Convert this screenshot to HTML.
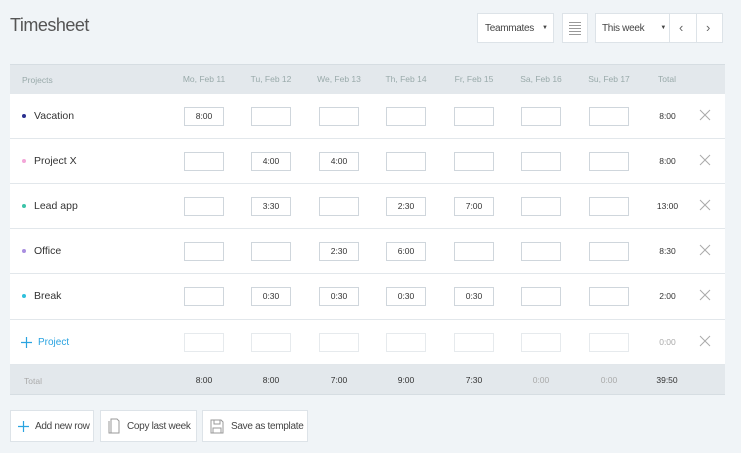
<html><head><style>
body{margin:0;width:741px;height:453px;background:#f0f4f7;font-family:"Liberation Sans",sans-serif;position:relative;overflow:hidden;color:#333}
.a{position:absolute}
.btn{position:absolute;background:#fff;border:1px solid #dde3e8;box-sizing:border-box;font-size:10px;letter-spacing:-0.3px;color:#444;display:flex;align-items:center;white-space:nowrap}
.row{position:absolute;left:10px;width:715px;height:45px;background:#fff;border-bottom:1px solid #e2e7eb;box-sizing:border-box}
.in{position:absolute;width:40px;height:19px;border:1px solid #cfd6dc;box-sizing:border-box;background:#fff;font-size:8.5px;text-align:center;line-height:17px;color:#333}
.hd{position:absolute;font-size:8.5px;color:#9aa;text-align:center;width:70px}
.lbl{position:absolute;left:24px;font-size:10.5px;top:16px}
.dot{position:absolute;left:12px;top:20px;width:4px;height:4px;border-radius:50%}
.tot{position:absolute;left:630px;width:55px;text-align:center;font-size:8.5px;top:17px}
.x{position:absolute;left:689px;top:15px}
</style></head><body>
<div class="a" style="left:10px;top:15px;font-size:18px;letter-spacing:-0.5px;color:#555">Timesheet</div>
<div class="btn" style="left:477px;top:13px;width:77px;height:30px;padding-left:7px">Teammates <span style="font-size:6px;margin-left:8px">▼</span></div>
<div class="btn" style="left:562px;top:13px;width:26px;height:30px;justify-content:center"><svg width="12" height="14"><g stroke="#999" stroke-width="1"><path d="M0 1.5h12M0 4.5h12M0 7.5h12M0 10.5h12M0 13.5h12"/></g></svg></div>
<div class="btn" style="left:595px;top:13px;width:128px;height:30px;padding-left:6px">This week <span style="font-size:6px;margin-left:16px">▼</span>
<div class="a" style="left:73px;top:0;width:1px;height:28px;background:#dde3e8"></div>
<div class="a" style="left:100px;top:0;width:1px;height:28px;background:#dde3e8"></div>
<div class="a" style="left:83px;top:6px;font-size:13px;color:#666">‹</div>
<div class="a" style="left:110px;top:6px;font-size:13px;color:#666">›</div></div>
<div class="a" style="left:10px;top:64px;width:715px;height:30px;background:#e3e8ec;border-top:1px solid #d6dde2;box-sizing:border-box"></div>
<div class="a" style="left:22px;top:75px;font-size:8.5px;color:#9aa">Projects</div>
<div class="hd" style="left:169px;top:74px">Mo, Feb 11</div><div class="hd" style="left:236px;top:74px">Tu, Feb 12</div><div class="hd" style="left:304px;top:74px">We, Feb 13</div><div class="hd" style="left:371px;top:74px">Th, Feb 14</div><div class="hd" style="left:439px;top:74px">Fr, Feb 15</div><div class="hd" style="left:506px;top:74px">Sa, Feb 16</div><div class="hd" style="left:574px;top:74px">Su, Feb 17</div><div class="hd" style="left:632px;top:74px">Total</div>

<div class="row" style="top:94px"><div class="dot" style="background:#2a2f8f"></div><div class="lbl">Vacation</div>
<div class="in" style="left:174px;top:13px">8:00</div><div class="in" style="left:241px;top:13px"></div><div class="in" style="left:309px;top:13px"></div><div class="in" style="left:376px;top:13px"></div><div class="in" style="left:444px;top:13px"></div><div class="in" style="left:511px;top:13px"></div><div class="in" style="left:579px;top:13px"></div><div class="tot">8:00</div><svg class="x" width="12" height="12"><path d="M1 1l10 10M11 1L1 11" stroke="#aaa" stroke-width="1"/></svg></div>

<div class="row" style="top:139px"><div class="dot" style="background:#f3a6d8"></div><div class="lbl">Project X</div>
<div class="in" style="left:174px;top:13px"></div><div class="in" style="left:241px;top:13px">4:00</div><div class="in" style="left:309px;top:13px">4:00</div><div class="in" style="left:376px;top:13px"></div><div class="in" style="left:444px;top:13px"></div><div class="in" style="left:511px;top:13px"></div><div class="in" style="left:579px;top:13px"></div><div class="tot">8:00</div><svg class="x" width="12" height="12"><path d="M1 1l10 10M11 1L1 11" stroke="#aaa" stroke-width="1"/></svg></div>

<div class="row" style="top:184px"><div class="dot" style="background:#3cc3a8"></div><div class="lbl">Lead app</div>
<div class="in" style="left:174px;top:13px"></div><div class="in" style="left:241px;top:13px">3:30</div><div class="in" style="left:309px;top:13px"></div><div class="in" style="left:376px;top:13px">2:30</div><div class="in" style="left:444px;top:13px">7:00</div><div class="in" style="left:511px;top:13px"></div><div class="in" style="left:579px;top:13px"></div><div class="tot">13:00</div><svg class="x" width="12" height="12"><path d="M1 1l10 10M11 1L1 11" stroke="#aaa" stroke-width="1"/></svg></div>

<div class="row" style="top:229px"><div class="dot" style="background:#a98ee0"></div><div class="lbl">Office</div>
<div class="in" style="left:174px;top:13px"></div><div class="in" style="left:241px;top:13px"></div><div class="in" style="left:309px;top:13px">2:30</div><div class="in" style="left:376px;top:13px">6:00</div><div class="in" style="left:444px;top:13px"></div><div class="in" style="left:511px;top:13px"></div><div class="in" style="left:579px;top:13px"></div><div class="tot">8:30</div><svg class="x" width="12" height="12"><path d="M1 1l10 10M11 1L1 11" stroke="#aaa" stroke-width="1"/></svg></div>

<div class="row" style="top:274px;height:46px"><div class="dot" style="background:#2fc0dc"></div><div class="lbl">Break</div>
<div class="in" style="left:174px;top:13px"></div><div class="in" style="left:241px;top:13px">0:30</div><div class="in" style="left:309px;top:13px">0:30</div><div class="in" style="left:376px;top:13px">0:30</div><div class="in" style="left:444px;top:13px">0:30</div><div class="in" style="left:511px;top:13px"></div><div class="in" style="left:579px;top:13px"></div><div class="tot">2:00</div><svg class="x" width="12" height="12"><path d="M1 1l10 10M11 1L1 11" stroke="#aaa" stroke-width="1"/></svg></div>

<div class="row" style="top:320px"><svg class="a" style="left:11px;top:17px" width="11" height="11"><path d="M5.5 0v11M0 5.5h11" stroke="#2aa3e0" stroke-width="1.2"/></svg><div class="lbl" style="left:28px;color:#2aa3e0;font-size:10px;top:17px">Project</div>
<div class="in" style="left:174px;top:13px;border-color:#e6eaed"></div><div class="in" style="left:241px;top:13px;border-color:#e6eaed"></div><div class="in" style="left:309px;top:13px;border-color:#e6eaed"></div><div class="in" style="left:376px;top:13px;border-color:#e6eaed"></div><div class="in" style="left:444px;top:13px;border-color:#e6eaed"></div><div class="in" style="left:511px;top:13px;border-color:#e6eaed"></div><div class="in" style="left:579px;top:13px;border-color:#e6eaed"></div><div class="tot" style="color:#aaa">0:00</div><svg class="x" width="12" height="12"><path d="M1 1l10 10M11 1L1 11" stroke="#aaa" stroke-width="1"/></svg></div>

<div class="a" style="left:10px;top:365px;width:715px;height:30px;background:#e3e8ec;border-bottom:1px solid #d6dde2;box-sizing:border-box;font-size:8.5px">
<div class="a" style="left:14px;top:11px;color:#aaa">Total</div>
<div class="hd" style="left:159px;top:10px;color:#333">8:00</div><div class="hd" style="left:226px;top:10px;color:#333">8:00</div><div class="hd" style="left:294px;top:10px;color:#333">7:00</div><div class="hd" style="left:361px;top:10px;color:#333">9:00</div><div class="hd" style="left:429px;top:10px;color:#333">7:30</div><div class="hd" style="left:496px;top:10px;color:#aaa">0:00</div><div class="hd" style="left:564px;top:10px;color:#aaa">0:00</div><div class="hd" style="left:622px;top:10px;color:#333">39:50</div></div>

<div class="btn" style="left:10px;top:410px;width:84px;height:32px;padding-left:7px"><svg width="11" height="11" style="margin-right:6px"><path d="M5.5 0v11M0 5.5h11" stroke="#2aa3e0" stroke-width="1.2"/></svg>Add new row</div>
<div class="btn" style="left:100px;top:410px;width:97px;height:32px;padding-left:7px"><svg width="12" height="16" style="margin-right:7px"><path d="M3 1h6l2 2v12H3z M1 3v12h8" fill="none" stroke="#999"/></svg>Copy last week</div>
<div class="btn" style="left:202px;top:410px;width:106px;height:32px;padding-left:7px"><svg width="14" height="15" style="margin-right:7px"><path d="M1 1h10l2 2v11H1z M4 1v4h6V1 M3 9h8v5H3z" fill="none" stroke="#999"/></svg>Save as template</div>
</body></html>
